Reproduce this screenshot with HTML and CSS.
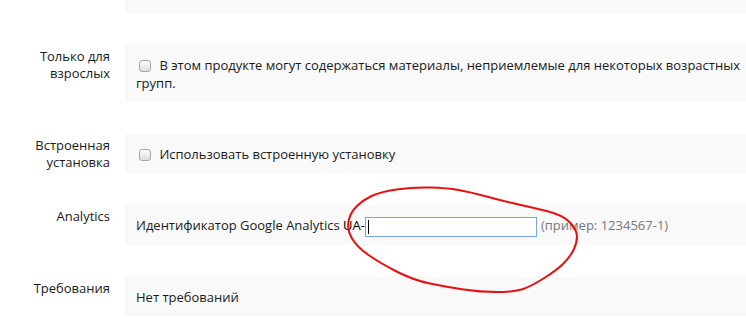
FILE: index.html
```html
<!DOCTYPE html>
<html lang="ru">
<head>
    <meta charset="UTF-8">
    <meta name="viewport" content="width=device-width, initial-scale=1.0">
    <title>Настройки продукта</title>
    <link rel="stylesheet" href="styles.css">
</head>
<body>

    <div class="form">
        <div class="row">
            <div class="label"></div>
            <div class="field field-tail"></div>
        </div>

        <div class="row">
            <div class="label">Только для взрослых</div>
            <div class="field">
                <label><input type="checkbox" class="check"> В этом продукте могут содержаться материалы, неприемлемые для некоторых возрастных групп.</label>
            </div>
        </div>

        <div class="row">
            <div class="label">Встроенная установка</div>
            <div class="field">
                <label><input type="checkbox" class="check"> Использовать встроенную установку</label>
            </div>
        </div>

        <div class="row">
            <div class="label">Analytics</div>
            <div class="field">
                Идентификатор Google Analytics <span class="prefix">UA-</span><span class="input-wrap"><input type="text" class="ga-input" autofocus><span class="caret"></span></span><span class="hint">(пример: 1234567-1)</span>
            </div>
        </div>

        <div class="row">
            <div class="label">Требования</div>
            <div class="field">Нет требований</div>
        </div>
    </div>

    <!-- hand drawn mark around the analytics field -->
    <svg class="scribble" width="746" height="318" viewBox="0 0 746 318">
        <path d="M371.5,196 Q380,192 396.5,189.5 Q413,187 430,187.5 Q447,188 458.5,190 Q470,192 486.5,196.5 Q503,201 516.5,204 Q530,207 546.5,211 Q563,215 570,222.5 Q577,230 577,236.5 Q577,243 573.5,250 Q570,257 563.5,263.5 Q557,270 543.5,278.5 Q530,287 521.5,289.5 Q513,292 496.5,292 Q480,292 463.5,289.5 Q447,287 430,283.5 Q413,280 396.5,271.5 Q380,263 368.5,255 Q357,247 352,238.5 Q347,230 348.5,221.5 Q350,213 356.5,206.5 Q363,200 371.5,196"
              fill="none" stroke="#e8100f" stroke-width="2" stroke-linecap="round" stroke-linejoin="round"/>
    </svg>

</body>
</html>
```

FILE: styles.css
```css
body {
    margin: 0;
    font-family: "Open Sans", Arial, sans-serif;
    font-size: 13px;
    color: #1a1a1a;
    background-color: #fff;
    position: relative;
    overflow: hidden;
    height: 318px;
}
.form {
    display: flex;
    flex-direction: column;
    gap: 32px;
}
.row {
    display: flex;
    align-items: flex-start;
}
.label {
    width: 100px;
    margin-left: 10px;
    margin-right: 15px;
    padding-top: 3px;
    text-align: right;
    line-height: 17px;
    flex-shrink: 0;
}
.field {
    flex: 1;
    margin-right: -30px;
    background-color: #f9f9f9;
    padding: 11px 11px 10px;
    line-height: 18px;
}
.field-tail {
    height: 13px;
    padding: 0;
}
.check {
    -webkit-appearance: none;
    appearance: none;
    width: 12px;
    height: 12px;
    margin: 0 5px 0 3px;
    border: 1px solid #a6a6a6;
    border-radius: 3px;
    background: linear-gradient(#fdfdfd, #dcdcdc);
    vertical-align: -2px;
}
.prefix {
    color: #000;
}
.input-wrap {
    position: relative;
    display: inline-block;
    vertical-align: middle;
    margin: -2px 4px -2px 0;
}
.ga-input {
    display: block;
    width: 172px;
    height: 20px;
    box-sizing: border-box;
    margin: 0;
    padding: 0 2px;
    border: 1px solid #7aa3df;
    font-family: inherit;
    font-size: 13px;
    outline: none;
    caret-color: transparent;
    background-color: #fff;
}
.caret {
    position: absolute;
    left: 3px;
    top: 3px;
    width: 1px;
    height: 14px;
    background-color: #000;
}
.hint {
    color: #777;
}
.scribble {
    position: absolute;
    left: 0;
    top: 0;
    pointer-events: none;
}
```
